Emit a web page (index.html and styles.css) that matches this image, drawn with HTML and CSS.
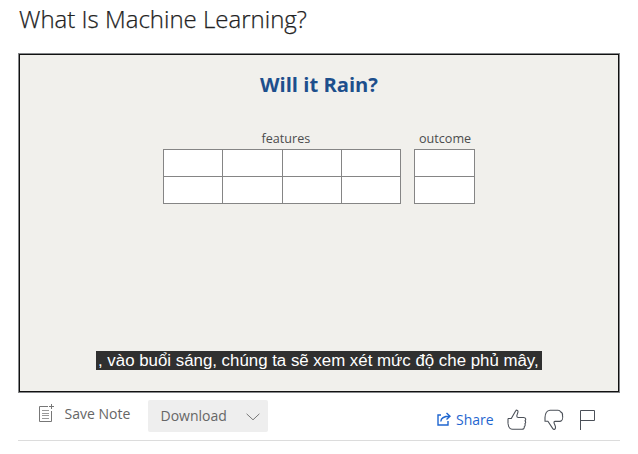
FILE: index.html
```html
<!DOCTYPE html>
<html lang="en">
<head>
<meta charset="utf-8">
<title>What Is Machine Learning?</title>
<link rel="stylesheet" href="styles.css">
</head>
<body>
<main class="lesson">
  <h1 class="lesson-title"><span>What Is Machine Learning?</span></h1>
  <section class="video">
    <h2 class="slide-title">Will it Rain?</h2>
    <div class="tables">
      <div class="group">
        <div class="label features-label">features</div>
        <div class="cells features">
          <i></i><i></i><i></i><i></i><i></i><i></i><i></i><i></i>
        </div>
      </div>
      <div class="group">
        <div class="label outcome-label">outcome</div>
        <div class="cells outcome"><i></i><i></i></div>
      </div>
    </div>
    <p class="caption" lang="vi">, vào buổi sáng, chúng ta sẽ xem xét mức độ che phủ mây,</p>
  </section>
  <footer class="toolbar">
    <svg class="note-icon" width="16" height="20" viewBox="0 0 16 20" fill="none" stroke="#777">
      <path d="M10 2.500H1.500v15h12V7"/>
      <path d="M4 6.500h7M4 9.500h7M4 11.500h7M4 14.500h7" stroke="#999"/>
      <path d="M13.500 0v5M11 2.500h5"/>
    </svg>
    <span class="save">Save Note</span>
    <button class="download" type="button"><span>Download</span>
      <svg width="14" height="8" viewBox="0 0 14 8" fill="none" stroke="#777"><path d="M.6.8 7 6.800 13.400.8"/></svg>
    </button>
    <a class="share">
      <svg width="14" height="14" viewBox="0 0 14 14" fill="none" stroke="#1f66d0" stroke-width="1.400">
        <path d="M4 3H1v10h10V9"/><path d="M3.800 9.500C4 6 6.500 4.200 12.500 4.200M9.500 1l3.500 3.200-3.500 3.200"/>
      </svg>
      <span>Share</span>
    </a>
    <svg class="thumb-up" width="20" height="22" viewBox="0 0 20 22" fill="none" stroke="#4b5058" stroke-width="1.100" stroke-linejoin="round">
      <path d="M1 9.500h3.300L8.600 2C9.200.8 11 .9 11 2.400c0 1.600-1.200 3.500-1.200 4.600 0 1 .7 1.500 1.500 1.500h5.200c2.800 0 2.400 2.800 1.500 3.300 1.100 1.100.6 2.500-.1 2.900.6 1.100.2 2.400-.6 2.800.2 1.800-.8 2.700-2.300 2.700H5.500C2.600 20.200 1.300 17.500 1 14.500"/>
      <path d="M1 9.500v5"/>
    </svg>
    <svg class="thumb-down" width="20" height="22" viewBox="0 0 20 22" fill="none" stroke="#4b5058" stroke-width="1.100" stroke-linejoin="round">
      <path d="M1 12.200V8.500C1.200 4 2.500 1.500 6 1.200h8c1.700 0 2.200.8 2.500 1.600 1.500.8 2.300 2.200 2 3.700.7 2.600-.3 5.300-2.500 5.900H11c-.8 0-1.200.7-.9 1.700.6 1.900 1.600 3 1.400 4.800-.1 1.700-1.900 2-2.700.7L3.900 12.200H1z"/>
    </svg>
    <svg class="flag" width="15" height="20" viewBox="0 0 15 20" fill="none" stroke="#4b5058">
      <path d="M.5 20V.5h14v10H.5"/>
    </svg>
  </footer>
</main>
</body>
</html>
```
FILE: styles.css
```css
* { box-sizing: border-box; }
body {
  margin: 0;
  background: #fff;
  font-family: "Open Sans", "Noto Sans", sans-serif;
}
.lesson { width: 602px; margin-left: 18px; }
.lesson-title {
  margin: 0;
  height: 53px;
  padding-left: 1px;
  font-size: 24px;
  font-weight: 300;
  line-height: 38px;
  color: #222;
  -webkit-text-stroke: 0.25px #222;
  white-space: nowrap;
}
.video {
  display: flex;
  flex-direction: column;
  height: 340px;
  padding: 16px 0 22px;
  border: 1px solid #85878a;
  box-shadow: inset 0 0 0 1px #111;
  background: #f1f0ec;
}
.slide-title {
  margin: 0;
  font-size: 20.2px;
  line-height: 28px;
  text-align: center;
  color: #1d4f8c;
}
.tables {
  display: flex;
  gap: 13px;
  margin: 31px 0 0 144px;
}
.label {
  height: 20px;
  font-size: 12.6px;
  line-height: 20px;
  color: #4c4c4c;
  white-space: nowrap;
}
.features-label { padding-left: 98.5px; }
.outcome-label { padding-left: 5px; }
.cells {
  display: grid;
  grid-template-rows: 27px 27px;
  height: 55px;
  border: solid #858585;
  border-width: 1px 0 0 1px;
}
.cells i { border: solid #858585; border-width: 0 1px 1px 0; background: #fff; }
.features { width: 238px; grid-template-columns: 59px 60px 59px 59px; }
.outcome { width: 61px; }
.caption {
  align-self: flex-start;
  width: 446px;
  margin: auto 0 0 77px;
  padding-left: 2px;
  font: 16.85px/19px "Liberation Sans", Arial, sans-serif;
  color: #fff;
  background: #303030;
  white-space: nowrap;
}
.toolbar {
  display: flex;
  align-items: flex-start;
  height: 48px;
  border-bottom: 1px solid #dcdcdc;
  font-size: 14px;
  line-height: 20px;
  color: #666;
  white-space: nowrap;
}
.toolbar svg { flex: none; }
.note-icon { margin: 11px 0 0 20px; }
.save { width: 84px; margin: 11px 0 0 10px; padding-left: 0.5px; }
.download {
  display: flex;
  justify-content: space-between;
  align-items: center;
  width: 120px;
  height: 32px;
  margin-top: 7px;
  padding: 0 8px 0 12.5px;
  border: 0;
  border-radius: 2px;
  background: #eee;
  font: inherit;
  color: #666;
}
.download svg { margin-top: 2px; }
.share {
  display: flex;
  gap: 5.5px;
  width: 70.5px;
  margin: 17px 0 0 168.5px;
  color: #1f66d0;
}
.share svg { margin-top: 2px; }
.thumb-up { margin-top: 16px; }
.thumb-down { margin: 16px 0 0 17px; }
.flag { margin: 17px 0 0 16px; }
```
